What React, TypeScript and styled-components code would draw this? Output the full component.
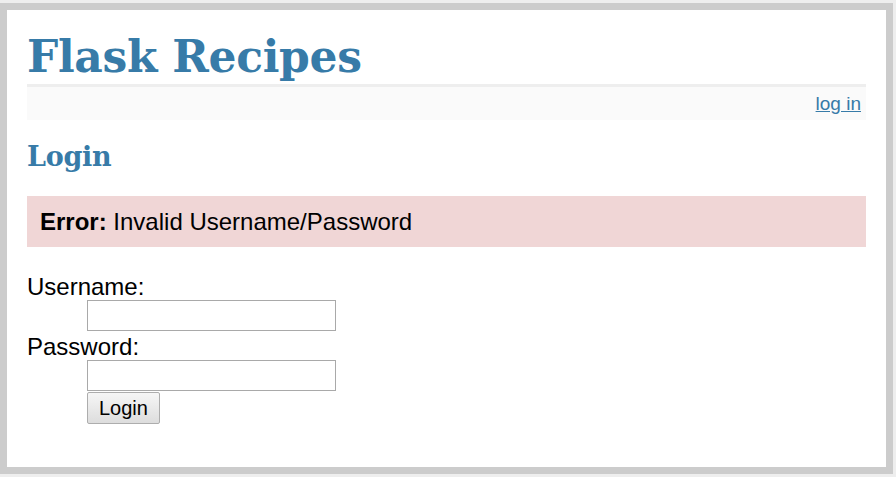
import { createGlobalStyle } from 'styled-components';
import styled from 'styled-components';

const GlobalStyle = createGlobalStyle`
    html, body {
        margin: 0;
        padding: 0;
    }

    body {
        background: #eee;
        font-family: 'Liberation Sans', Arial, sans-serif;
        font-size: 24px;
        color: #000;
        padding: 3px 3px 3px 0;
    }
`;

function App() {
    return (
        <>
            <GlobalStyle />
            <Page>
                <Title>Flask Recipes</Title>
                <MetaNav>
                    <NavLink href="#">log in</NavLink>
                </MetaNav>
                <SubTitle>Login</SubTitle>
                <ErrorBox>
                    <strong>Error:</strong> Invalid Username/Password
                </ErrorBox>
                <LoginForm onSubmit={(e) => e.preventDefault()}>
                    <FieldList>
                        <FieldLabel>Username:</FieldLabel>
                        <FieldValue $gap={3}>
                            <TextInput type="text" name="username" />
                        </FieldValue>
                        <FieldLabel>Password:</FieldLabel>
                        <FieldValue $gap={0}>
                            <TextInput type="password" name="password" />
                            <SubmitButton type="submit">Login</SubmitButton>
                        </FieldValue>
                    </FieldList>
                </LoginForm>
            </Page>
        </>
    );
}

export default App;

const Page = styled.div`
    box-sizing: border-box;
    height: 471px;
    border: 7px solid #ccc;
    padding: 20px;
    background: white;
`;

const Title = styled.h1`
    margin: 0;
    font-family: 'DejaVu Serif', Georgia, serif;
    font-weight: bold;
    font-size: 44px;
    letter-spacing: -0.3px;
    line-height: 54px;
    color: #377ba8;
    border-bottom: 3px solid #eee;
`;

const MetaNav = styled.div`
    background: #fafafa;
    text-align: right;
    font-size: 19px;
    line-height: 21px;
    padding: 6px 5px;
`;

const NavLink = styled.a`
    color: #377ba8;
`;

const SubTitle = styled.h2`
    margin: 16px 0 0;
    font-family: 'DejaVu Serif', Georgia, serif;
    font-weight: bold;
    font-size: 27px;
    letter-spacing: -0.3px;
    line-height: 42px;
    color: #377ba8;
`;

const ErrorBox = styled.div`
    margin-top: 18px;
    background: #f0d6d6;
    padding: 13px;
    line-height: 25px;
`;

const LoginForm = styled.form`
    margin-top: 27px;
`;

const FieldList = styled.dl`
    margin: 0;
`;

const FieldLabel = styled.dt`
    line-height: 26px;
`;

const FieldValue = styled.dd<{ $gap: number }>`
    margin: 0 0 ${(p) => p.$gap}px 60px;
    display: flex;
    flex-direction: column;
    align-items: flex-start;
    gap: 1px;
`;

const TextInput = styled.input`
    box-sizing: border-box;
    width: 249px;
    height: 31px;
    margin: 0;
    border: 1px solid #a9a9a9;
    background: white;
    font-family: 'Liberation Sans', Arial, sans-serif;
    font-size: 18px;
`;

const SubmitButton = styled.button`
    box-sizing: border-box;
    height: 32px;
    margin: 0;
    padding: 0 11px;
    border: 1px solid #adadad;
    border-radius: 2px;
    background: linear-gradient(#f6f6f6, #dddddd);
    font-family: 'Liberation Sans', Arial, sans-serif;
    font-size: 20px;
    color: #000;
`;
